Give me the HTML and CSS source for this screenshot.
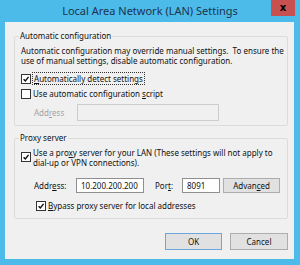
FILE: index.html
```html
<!DOCTYPE html>
<html>
<head>
<meta charset="utf-8">
<link rel="stylesheet" href="styles.css">
</head>
<body>
<div class="window">
  <div class="titlebar">
    <span class="title">Local Area Network (LAN) Settings</span>
    <span class="close">x</span>
  </div>
  <div class="client">
    <fieldset class="group auto">
      <legend>Automatic configuration</legend>
      <p class="desc">Automatic configuration may override manual settings.&nbsp; To ensure the use of manual settings, disable automatic configuration.</p>
      <label class="check row1">
        <span class="box on"><svg viewBox="0 0 10 10"><path d="M2 5.2 L4.2 7.4 L8.2 2.4" /></svg></span>
        <span class="focus"><u>A</u>utomatically detect settings</span>
      </label>
      <label class="check row2">
        <span class="box"></span>
        <span>Use automatic configuration <u>s</u>cript</span>
      </label>
      <div class="field disabled">
        <span class="lbl">Add<u>r</u>ess</span>
        <span class="input wide"></span>
      </div>
    </fieldset>
    <fieldset class="group proxy">
      <legend>Proxy server</legend>
      <label class="check multi">
        <span class="box on"><svg viewBox="0 0 10 10"><path d="M2 5.2 L4.2 7.4 L8.2 2.4" /></svg></span>
        <span>Use a pro<u>x</u>y server for your LAN (These settings will not apply to dial-up or VPN connections).</span>
      </label>
      <div class="field server">
        <span class="lbl">Addr<u>e</u>ss:</span>
        <span class="input addr">10.200.200.200</span>
        <span class="lbl port-lbl">Por<u>t</u>:</span>
        <span class="input port">8091</span>
        <span class="btn adv">Advan<u>c</u>ed</span>
      </div>
      <label class="check bypass">
        <span class="box on"><svg viewBox="0 0 10 10"><path d="M2 5.2 L4.2 7.4 L8.2 2.4" /></svg></span>
        <span><u>B</u>ypass proxy server for local addresses</span>
      </label>
    </fieldset>
    <div class="buttons">
      <span class="btn ok">OK</span>
      <span class="btn cancel">Cancel</span>
    </div>
  </div>
</div>
</body>
</html>
```
FILE: styles.css
```css
* { box-sizing: border-box; }
html, body { margin: 0; padding: 0; }
body {
  width: 300px;
  height: 265px;
  overflow: hidden;
  font-family: "Noto Sans", "Open Sans", sans-serif;
  font-size: 8px;
  color: #111;
}
.window {
  width: 300px;
  height: 265px;
  background: #4cbbe9;
  display: flex;
  flex-direction: column;
}
.titlebar {
  height: 22px;
  display: grid;
  grid-template-columns: 1fr auto 1fr;
  align-items: start;
}
.title {
  grid-column: 2;
  font-size: 11px;
  line-height: 21px;
  color: #1d3350;
  white-space: nowrap;
}
.close {
  grid-column: 3;
  justify-self: end;
  margin-right: 5px;
  width: 24px;
  height: 16px;
  background: #c75050;
  color: #000;
  font-weight: bold;
  font-size: 10px;
  line-height: 15px;
  text-align: center;
  font-family: "DejaVu Sans", sans-serif;
}
.client {
  margin: 0 6px 0 5px;
  height: 237px;
  background: #f0f0f0;
  padding: 8px 6px 0 9px;
  display: flex;
  flex-direction: column;
}
.group {
  margin: 0;
  border: 1px solid #dcdcdc;
  border-radius: 2px;
  padding: 0 0 0 6px;
  min-width: 0;
}
.group legend {
  padding: 0 1px;
  margin-left: -2px;
  line-height: 12px;
  height: 12px;
}
.auto { height: 96px; }
.proxy { height: 87px; margin-top: 6px; }
.desc {
  margin: 4px 0 0;
  line-height: 10px;
  width: 264px;
}
.check {
  display: flex;
  align-items: center;
  gap: 2px;
  line-height: 11px;
}
.box {
  width: 10px;
  height: 10px;
  border: 1px solid #333;
  background: #fff;
  flex: none;
  display: flex;
}
.box svg { width: 100%; height: 100%; }
.box svg path {
  fill: none;
  stroke: #111;
  stroke-width: 1.8;
}
.row1 { margin-top: 7px; }
.row2 { margin-top: 4px; }
.focus {
  outline: 1px dotted #333;
  outline-offset: 0;
  padding: 0 1px;
}
.field {
  display: flex;
  align-items: center;
}
.field .lbl { width: 55px; padding-left: 13px; flex: none; }
.disabled { margin-top: 5px; color: #a2a2a2; }
.disabled .lbl { width: 56px; }
.input {
  height: 17px;
  border: 1px solid #8f8f8f;
  background: #fff;
  padding-left: 4px;
  line-height: 15px;
  color: #111;
  flex: none;
}
.wide {
  width: 142px;
  border-color: #cdcdcd;
  background: #f0f0f0;
}
.multi { align-items: flex-start; margin-top: 4px; line-height: 10px; }
.multi .box { margin-top: 4px; }
.server { margin-top: 10px; }
.server .input { height: 15px; line-height: 13px; }
.addr { width: 68px; }
.field .port-lbl { width: auto; padding-left: 11px; margin-right: 9px; }
.port { width: 38px; }
.btn {
  display: flex;
  align-items: center;
  justify-content: center;
  background: #e1e1e1;
  border: 1px solid #adadad;
  color: #111;
}
.adv { width: 57px; height: 15px; margin-left: 3px; }
.bypass { margin: 7px 0 0 15px; }
.buttons {
  display: flex;
  justify-content: flex-end;
  gap: 8px;
  margin-top: 14px;
}
.ok, .cancel { height: 17px; }
.ok { width: 57px; border-color: #6ea6dc; }
.cancel { width: 58px; }
```
